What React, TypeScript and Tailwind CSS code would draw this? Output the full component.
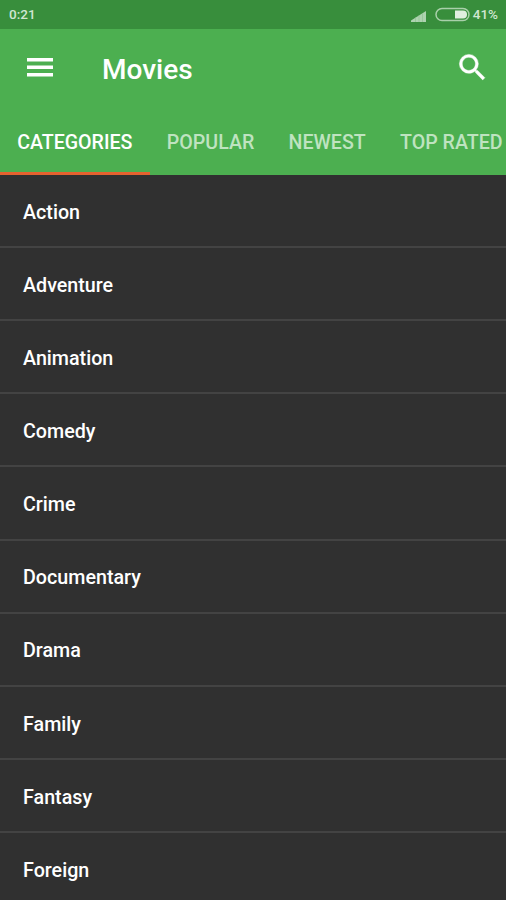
import React, { useState } from 'react';

interface TabProps {
    label: string;
    active: boolean;
    onSelect: () => void;
}

const TABS = ['CATEGORIES', 'POPULAR', 'NEWEST', 'TOP RATED'];

const CATEGORIES = [
    'Action',
    'Adventure',
    'Animation',
    'Comedy',
    'Crime',
    'Documentary',
    'Drama',
    'Family',
    'Fantasy',
    'Foreign',
];

const StatusBar: React.FC = () => (
    <div className="flex h-[29px] shrink-0 items-center justify-between bg-[#388e3c] pr-[8px] pl-[9px] text-[13.500px] font-medium text-[#d0e6d1]">
        <span>0:21</span>
        <div className="flex items-center">
            {/* Signal */}
            <svg width="15" height="11" viewBox="0 0 15 11" className="mt-[3px] mr-[9px]">
                <path d="M0 11V9.500L15 0V11z" fill="#aed3b0" />
                <path d="M4.500 11V6.300M8 11V4.200M11.500 11V2.100" stroke="#8cbf8f" strokeWidth="0.600" />
            </svg>
            {/* Battery */}
            <svg width="35" height="15" viewBox="0 0 35 15" className="mr-[3px]">
                <rect x="1" y="1.500" width="33" height="12" rx="6" fill="none" stroke="#a9d0aa" strokeWidth="1.500" />
                <path d="M20 3.500h8a4 4 0 0 1 0 8h-8z" fill="#e0efe0" />
            </svg>
            <span className="text-[13.500px]">41%</span>
        </div>
    </div>
);

const Tab: React.FC<TabProps> = ({ label, active, onSelect }) => (
    <button
        onClick={onSelect}
        className={`h-full shrink-0 border-b-[3px] px-[17.200px] pt-[5px] text-[19.600px] font-medium whitespace-nowrap ${
            active ? 'border-[#e5622f] text-white' : 'border-transparent text-[#bfe3c0]'
        }`}
    >
        {label}
    </button>
);

const App: React.FC = () => {
    const [activeTab, setActiveTab] = useState('CATEGORIES');

    return (
        <div className="flex h-[900px] w-[506px] flex-col overflow-hidden bg-[#303030] font-['Roboto',sans-serif]">
            <StatusBar />

            {/* Toolbar */}
            <div className="flex h-[80px] shrink-0 items-center bg-[#4caf50] pr-[16px] pl-[27px] text-white">
                <svg width="26" height="19" viewBox="0 0 26 19" className="mb-[3px]" fill="currentColor">
                    <path d="M0 0h26v3.500H0zM0 7.500h26V11H0zM0 15h26v3.500H0z" />
                </svg>
                <h1 className="mt-[2px] ml-[49px] text-[28px] font-medium">Movies</h1>
                <svg
                    width="35"
                    height="35"
                    viewBox="0 0 24 24"
                    className="mb-[3px] ml-auto"
                    fill="currentColor"
                    stroke="currentColor"
                    strokeWidth="0.300"
                >
                    <path d="M15.500 14h-.79l-.28-.27A6.471 6.471 0 0 0 16 9.500 6.500 6.500 0 1 0 9.500 16c1.610 0 3.090-.59 4.230-1.570l.27.28v.79l5 4.990L20.490 19l-4.990-5zm-6 0C7.010 14 5 11.990 5 9.500S7.010 5 9.500 5 14 7.010 14 9.500 11.990 14 9.500 14z" />
                </svg>
            </div>

            {/* Tabs */}
            <div className="flex h-[66px] w-full shrink-0 overflow-hidden bg-[#4caf50]">
                {TABS.map((tab) => (
                    <Tab key={tab} label={tab} active={tab === activeTab} onSelect={() => setActiveTab(tab)} />
                ))}
            </div>

            {/* Category list */}
            <ul className="flex-1 overflow-hidden">
                {CATEGORIES.map((category) => (
                    <li
                        key={category}
                        className="flex h-[73.120px] items-center border-b-2 border-[#434343] pt-[4px] pl-[23px] text-[19.700px] font-medium text-white"
                    >
                        {category}
                    </li>
                ))}
            </ul>
        </div>
    );
};

export default App;
